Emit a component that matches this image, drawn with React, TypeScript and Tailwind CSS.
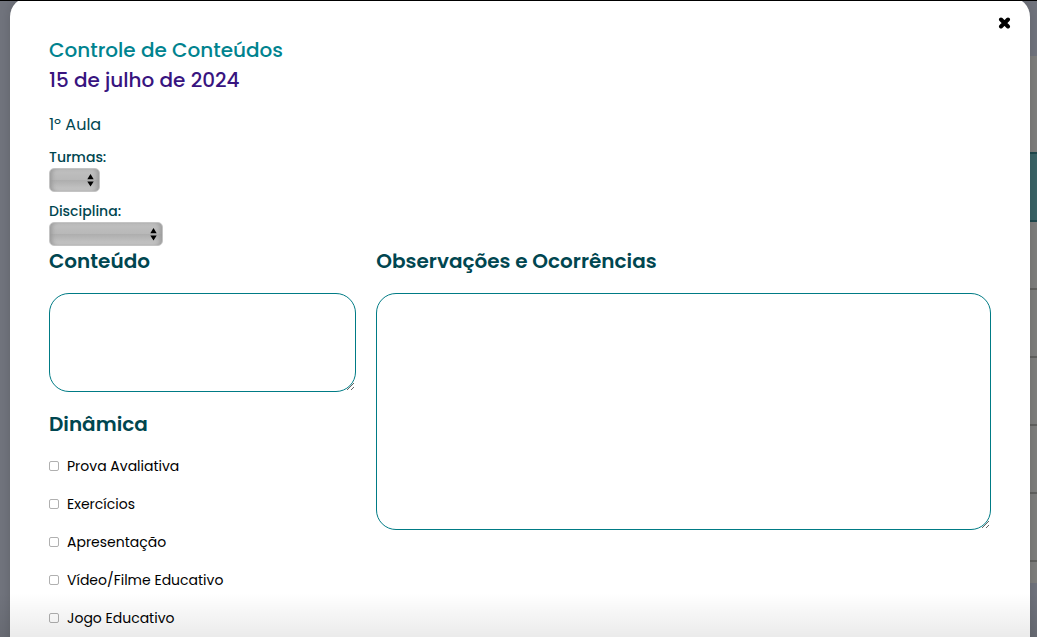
import { useId } from "react";

const activities = [
  "Prova Avaliativa",
  "Exercícios",
  "Apresentação",
  "Vídeo/Filme Educativo",
  "Jogo Educativo",
];

function SelectField({ label, width }: { label: string; width: string }) {
  const id = useId();
  return (
    <div className="flex flex-col items-start">
      <label htmlFor={id} className="text-[14px] leading-[21px] font-medium text-[#004650]">
        {label}
      </label>
      <div className={`relative h-6 ${width}`}>
        <select
          id={id}
          className="block h-6 w-full appearance-none rounded-[5px] border border-[#c4c4c4] bg-[linear-gradient(#c0c0c0,#b8b8b8_50%,#adadad_50%,#c8c8c8)] text-[14px] shadow-[inset_4px_0_4px_-2px_#9a9a9a,inset_-4px_0_4px_-2px_#9a9a9a]"
        >
          <option value=""></option>
        </select>
        <svg
          aria-hidden="true"
          viewBox="0 0 7 13"
          className="pointer-events-none absolute top-[6px] right-[6px] h-[13px] w-[7px]"
        >
          <path d="M3.5 0 6.7 5.2H.3zM3.5 12.6.3 7.4h6.4z" fill="#000" />
        </svg>
      </div>
    </div>
  );
}

function NotesField({ label, height }: { label: string; height: string }) {
  const id = useId();
  return (
    <div>
      <label htmlFor={id} className="block text-[20px] leading-[30px] font-semibold text-[#004650]">
        {label}
      </label>
      <textarea
        id={id}
        className={`mt-[17px] block w-full resize rounded-[20px] border border-[#007b85] bg-white px-4 py-2 text-[14px] outline-none ${height}`}
      />
    </div>
  );
}

function PageBehind() {
  return (
    <div aria-hidden="true" className="absolute inset-0 flex flex-col bg-[#71747d]">
      <div className="mt-[55px] ml-auto w-1/2 bg-[#7f7f7d]">
        <div className="h-24" />
        <div className="h-[70px] border-y-2 border-[#20494d] bg-[#3a6467]" />
        {[0, 1, 2, 3, 4].map((row) => (
          <div key={row} className="h-[68px] border-b-2 border-[#62625f]" />
        ))}
        <div className="h-[21px]" />
      </div>
    </div>
  );
}

export default function App() {
  return (
    <div className="relative h-screen overflow-hidden border-t border-black font-['Poppins','Inter',sans-serif]">
      <PageBehind />
      <main
        role="dialog"
        aria-labelledby="dialog-title"
        className="relative mr-[7px] -mt-1 ml-[10px] min-h-full rounded-t-[20px] bg-white px-[39px] pt-[38px] pb-10 shadow-[0_0_12px_rgba(0,0,0,0.15)]"
      >
        <button
          type="button"
          aria-label="Fechar"
          className="absolute top-[18px] right-[18px] flex size-[15px] items-center justify-center"
        >
          <svg viewBox="0 0 13 12" className="h-3 w-[13px]" aria-hidden="true">
            <path
              d="M3 2.5 10 9.5M10 2.5 3 9.5"
              stroke="#000"
              strokeWidth="4"
              strokeLinecap="round"
            />
          </svg>
        </button>

        <header className="text-[20px] leading-[30px] font-medium">
          <h1 id="dialog-title" className="text-[#00838f]">
            Controle de Conteúdos
          </h1>
          <h2 className="text-[#38147f]">15 de julho de 2024</h2>
        </header>

        <form>
          <p className="mt-[18px] text-[16px] leading-6 text-[#004650]">1º Aula</p>
          <div className="mt-[10px] flex flex-col gap-[9px]">
            <SelectField label="Turmas:" width="w-[51px]" />
            <SelectField label="Disciplina:" width="w-[114px]" />
          </div>

          <div className="grid grid-cols-[1fr_2fr] gap-5">
            <div>
              <NotesField label="Conteúdo" height="h-[99px]" />
              <fieldset className="mt-[17px]">
                <legend className="text-[20px] leading-[30px] font-semibold text-[#004650]">
                  Dinâmica
                </legend>
                <div className="mt-2">
                  {activities.map((name) => (
                    <label
                      key={name}
                      className="flex h-[38px] items-center gap-2 text-[14px] text-black"
                    >
                      <input
                        type="checkbox"
                        className="size-[10px] appearance-none rounded-[2px] border border-[#b0b0b0] bg-white checked:bg-[#00838f]"
                      />
                      {name}
                    </label>
                  ))}
                </div>
              </fieldset>
            </div>
            <NotesField label="Observações e Ocorrências" height="h-[237px]" />
          </div>
        </form>
      </main>
      <div className="pointer-events-none absolute inset-x-0 bottom-0 h-11 bg-linear-to-b from-transparent to-black/8" />
    </div>
  );
}
